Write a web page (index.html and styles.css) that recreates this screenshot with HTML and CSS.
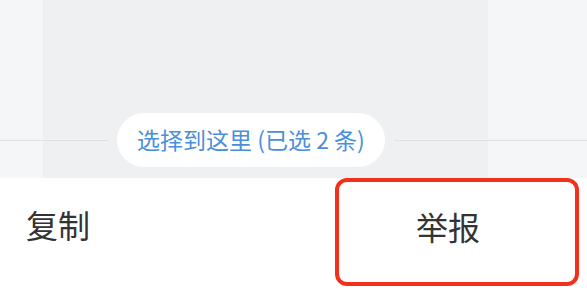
FILE: index.html
```html
<!DOCTYPE html>
<html lang="zh-CN">
<head>
    <meta charset="UTF-8">
    <title>选择消息</title>
    <link rel="stylesheet" href="styles.css">
</head>
<body>
    <div class="chat">
        <div class="divider">
            <span class="line line-left"></span>
            <span class="pill">选择到这里 (已选 2 条)</span>
            <span class="line"></span>
        </div>
    </div>
    <div class="menu">
        <div class="menu-item copy">复制</div>
        <div class="menu-item report">举报</div>
    </div>
</body>
</html>
```

FILE: styles.css
```css
body {
    margin: 0;
    width: 587px;
    height: 293px;
    overflow: hidden;
    font-family: "Noto Sans CJK SC", "Noto Sans", sans-serif;
    background: #ffffff;
}
.chat {
    height: 178px;
    box-sizing: border-box;
    padding-top: 113px;
    background: linear-gradient(to right, #f5f6f8 43px, #eff0f2 43px, #eff0f2 488px, #f5f6f8 488px);
}
.divider {
    display: flex;
    align-items: center;
    height: 54px;
}
.line {
    flex: 1;
    height: 1px;
    background-color: #dfe0e3;
}
.line-left {
    flex: 0 0 108px;
}
.pill {
    width: 268px;
    height: 54px;
    margin: 0 9px;
    padding-bottom: 2px;
    box-sizing: border-box;
    border-radius: 27px;
    background: #ffffff;
    color: #4a8fdb;
    font-size: 23px;
    display: flex;
    align-items: center;
    justify-content: center;
}
.menu {
    display: flex;
    height: 115px;
}
.menu-item {
    height: 108px;
    box-sizing: border-box;
    padding-bottom: 16px;
    display: flex;
    align-items: center;
    font-size: 32px;
    color: #333333;
}
.copy {
    padding-left: 26px;
}
.report {
    margin-left: auto;
    margin-right: 8px;
    width: 244px;
    border: 4px solid #f2301b;
    border-radius: 12px;
    justify-content: center;
    padding-right: 18px;
    padding-bottom: 12px;
}
```
